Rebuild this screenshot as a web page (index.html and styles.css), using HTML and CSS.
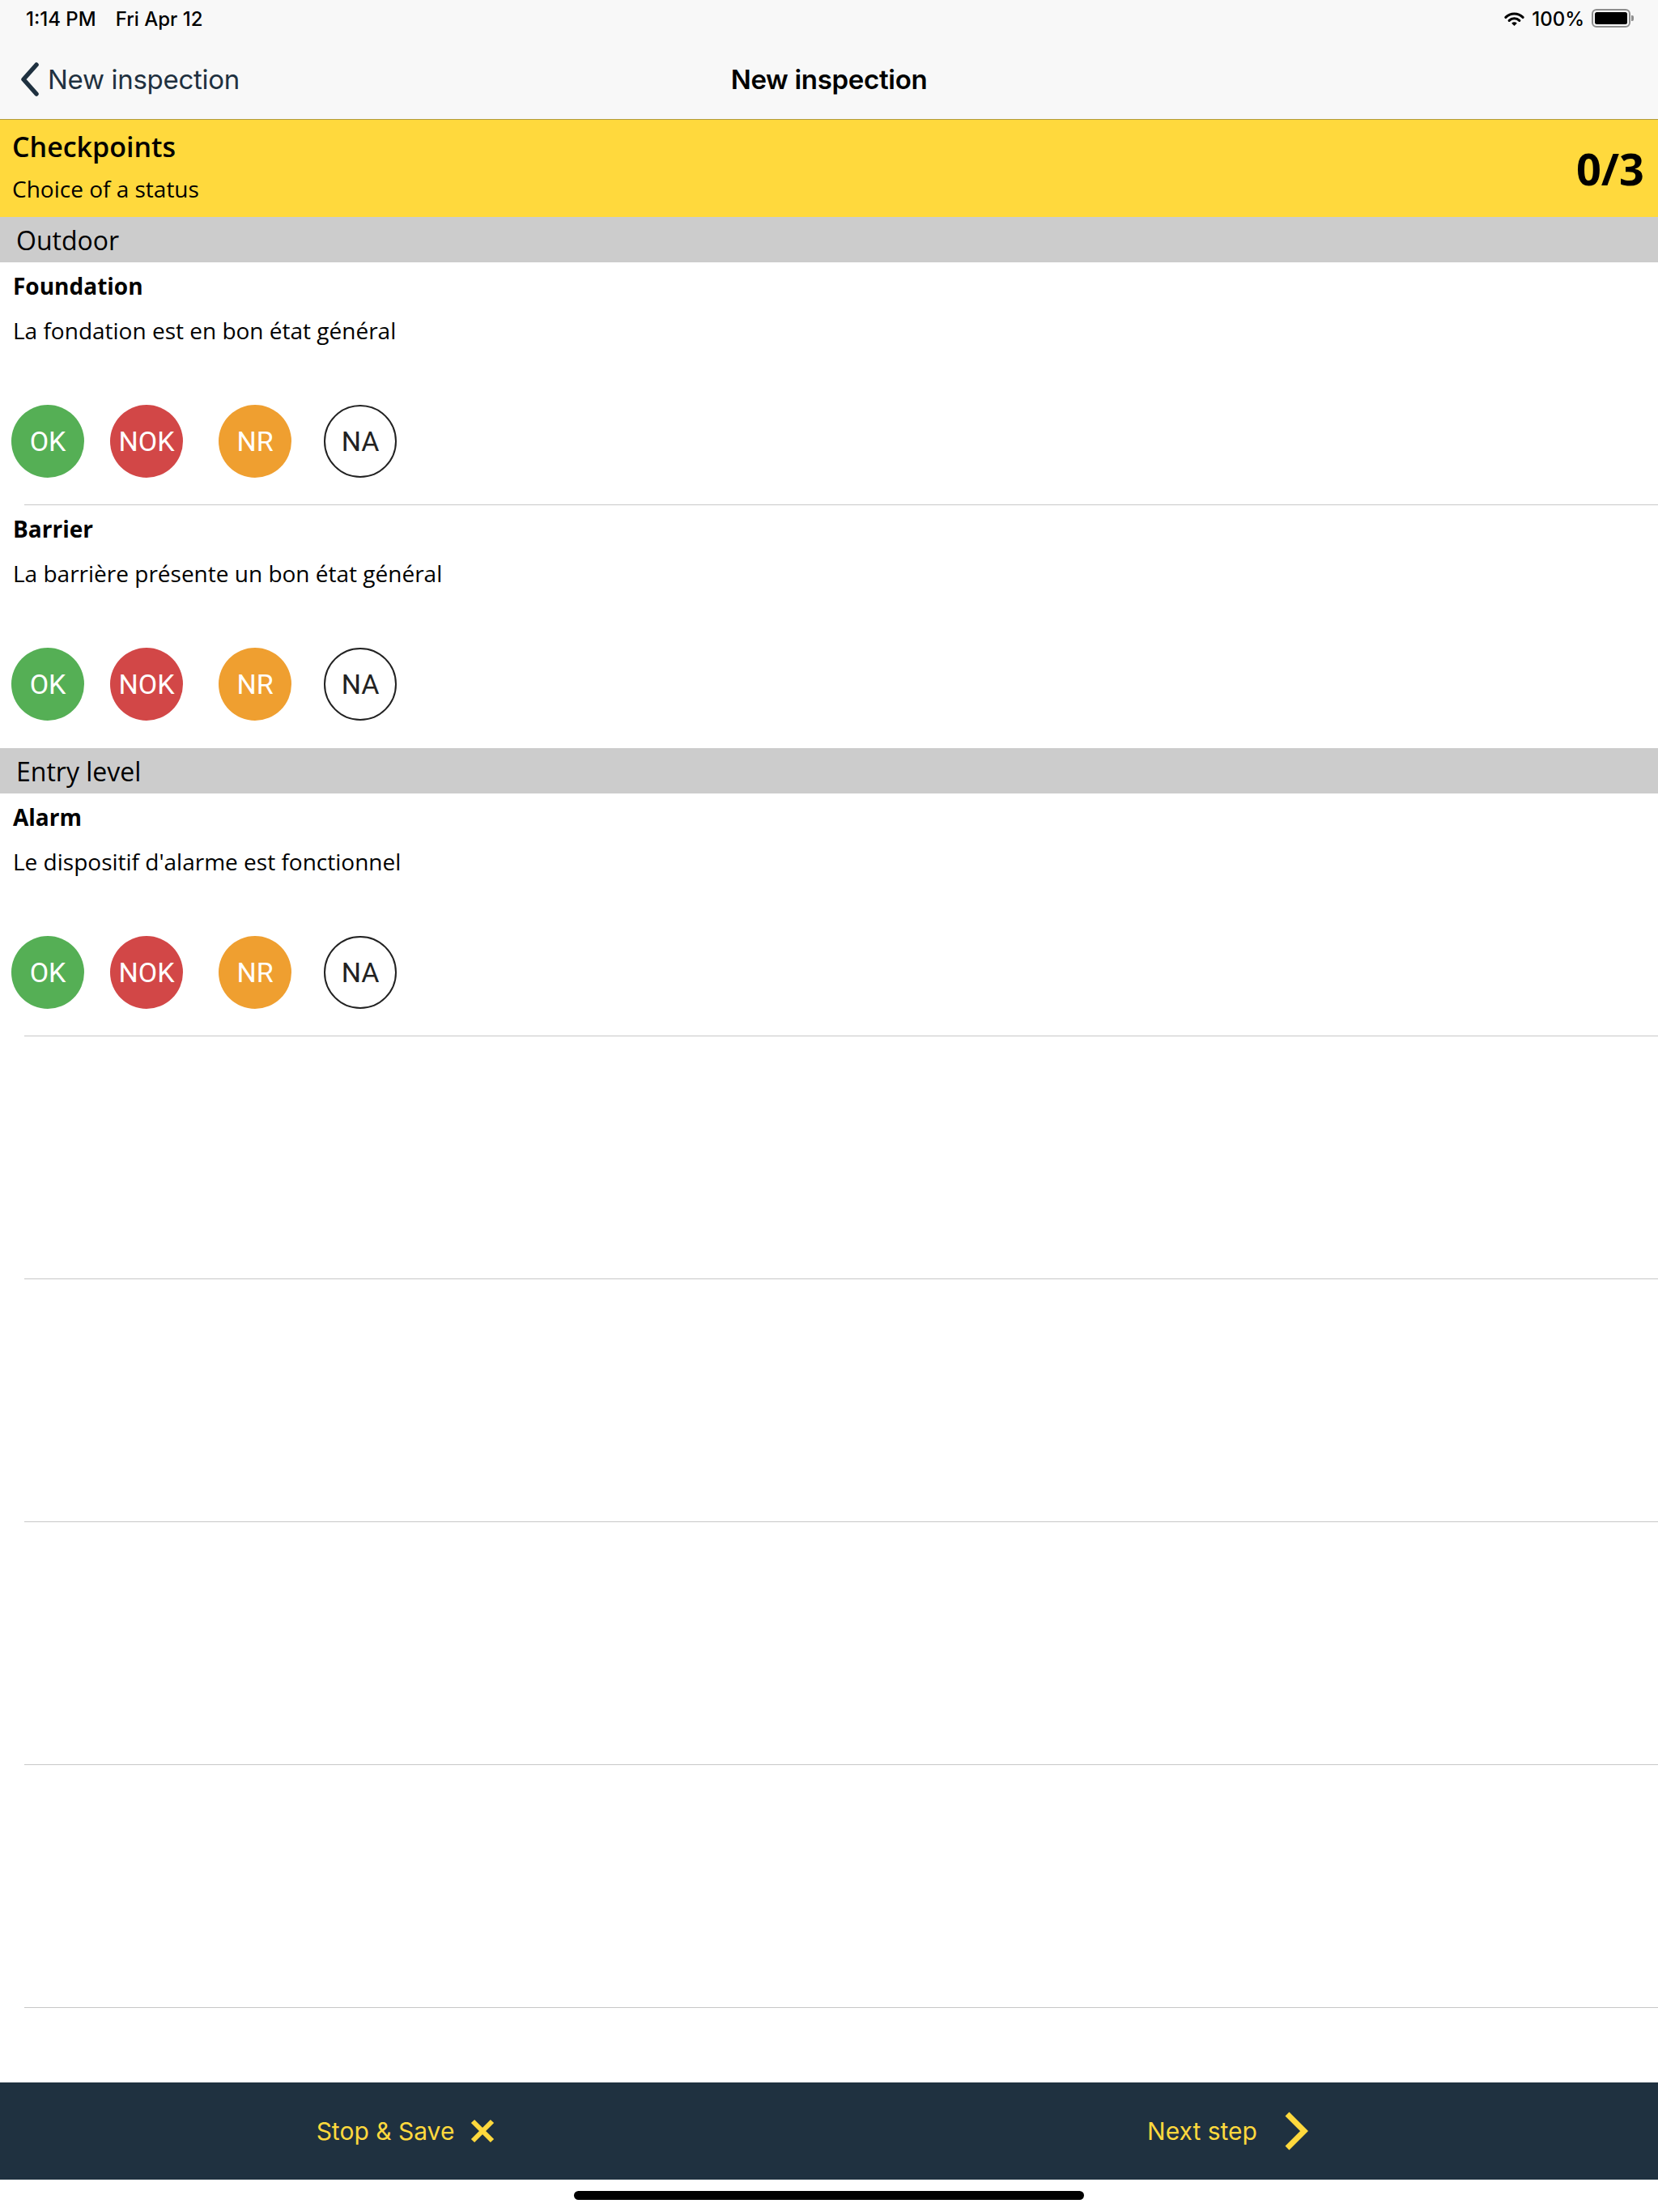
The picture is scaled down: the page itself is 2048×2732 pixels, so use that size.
FILE: index.html
```html
<!DOCTYPE html>
<html lang="en">
<head>
  <meta charset="UTF-8">
  <meta name="viewport" content="width=device-width, initial-scale=1.0">
  <title>New inspection</title>
  <link rel="stylesheet" href="styles.css">
</head>
<body>
  <div class="screen">
    <header class="topbar">
      <div class="status">
        <div class="status-left">
          <span>1:14 PM</span>
          <span>Fri Apr 12</span>
        </div>
        <div class="status-right">
          <svg class="wifi" width="27" height="19" viewBox="0 0 27 19">
            <path d="M2.9 7.4 A15 15 0 0 1 24.1 7.4" fill="none" stroke="#000" stroke-width="3.2" stroke-linecap="round"/>
            <path d="M7.2 11.3 A9 9 0 0 1 19.8 11.3" fill="none" stroke="#000" stroke-width="3.2" stroke-linecap="round"/>
            <path d="M13.5 18 L10.2 14.7 A4.6 4.6 0 0 1 16.8 14.7 Z" fill="#000"/>
          </svg>
          <span>100%</span>
          <svg class="battery" width="52" height="24" viewBox="0 0 52 24">
            <rect x="1" y="1" width="46" height="21" rx="5" fill="none" stroke="#8e8e8e" stroke-width="2"/>
            <rect x="4" y="4" width="40" height="15" rx="2.5" fill="#000"/>
            <path d="M49 8 h1 a2 2 0 0 1 2 2 v3 a2 2 0 0 1 -2 2 h-1 Z" fill="#8e8e8e"/>
          </svg>
        </div>
      </div>
      <nav class="navbar">
        <a class="back" href="#">
          <svg width="26" height="42" viewBox="0 0 26 42">
            <path d="M21 3 L5 21 L21 39" fill="none" stroke="#1f3140" stroke-width="5.5" stroke-linecap="round" stroke-linejoin="round"/>
          </svg>
          <span>New inspection</span>
        </a>
        <h1 class="nav-title">New inspection</h1>
        <div></div>
      </nav>
    </header>

    <section class="summary">
      <div class="summary-text">
        <div class="summary-title">Checkpoints</div>
        <div class="summary-sub">Choice of a status</div>
      </div>
      <div class="summary-count">0/3</div>
    </section>

    <div class="list">
      <div class="section-head">Outdoor</div>

      <div class="row">
        <div class="row-title">Foundation</div>
        <div class="row-text">La fondation est en bon état général</div>
        <div class="choices">
          <span class="choice ok">OK</span>
          <span class="choice nok">NOK</span>
          <span class="choice nr">NR</span>
          <span class="choice na">NA</span>
        </div>
      </div>

      <div class="row last">
        <div class="row-title">Barrier</div>
        <div class="row-text">La barrière présente un bon état général</div>
        <div class="choices">
          <span class="choice ok">OK</span>
          <span class="choice nok">NOK</span>
          <span class="choice nr">NR</span>
          <span class="choice na">NA</span>
        </div>
      </div>

      <div class="section-head">Entry level</div>

      <div class="row">
        <div class="row-title">Alarm</div>
        <div class="row-text">Le dispositif d'alarme est fonctionnel</div>
        <div class="choices">
          <span class="choice ok">OK</span>
          <span class="choice nok">NOK</span>
          <span class="choice nr">NR</span>
          <span class="choice na">NA</span>
        </div>
      </div>

      <div class="row"></div>
      <div class="row"></div>
      <div class="row"></div>
      <div class="row"></div>
    </div>

    <footer class="actions">
      <a class="action stop" href="#">
        <span>Stop &amp; Save</span>
        <svg width="30" height="30" viewBox="0 0 30 30">
          <path d="M3 3 L27 27 M27 3 L3 27" stroke="#ffd93d" stroke-width="6"/>
        </svg>
      </a>
      <a class="action next" href="#">
        <span>Next step</span>
        <svg width="32" height="48" viewBox="0 0 32 48">
          <path d="M5 3 L26 24 L5 45" fill="none" stroke="#ffd93d" stroke-width="7"/>
        </svg>
      </a>
    </footer>

    <div class="home">
      <span class="home-bar"></span>
    </div>
  </div>
</body>
</html>
```

FILE: styles.css
```css
html {
  --yellow: #ffd93d;
  --navy: #1f3140;
  --grey: #cccccc;
  --line: #c8c8c8;
}

html, body {
  margin: 0;
  padding: 0;
}

body {
  width: 2048px;
  height: 2732px;
  background: #fff;
  font-family: "Open Sans", "Liberation Sans", sans-serif;
  color: #000;
  overflow: hidden;
}

.screen {
  display: flex;
  flex-direction: column;
  height: 2732px;
}

/* barre du haut */
.topbar {
  background: #f8f8f8;
  border-bottom: 1px solid #b39c3c;
  font-family: Inter, "Liberation Sans", sans-serif;
}

.status {
  height: 46px;
  display: flex;
  align-items: center;
  justify-content: space-between;
  padding: 0 30px 0 32px;
  font-size: 24px;
  font-weight: 500;
}

.status-left {
  display: flex;
  gap: 24px;
}

.status-right {
  display: flex;
  align-items: center;
  gap: 8px;
}

.status-right .battery {
  margin-left: 1px;
}

.navbar {
  height: 101px;
  display: grid;
  grid-template-columns: 1fr auto 1fr;
  align-items: center;
}

.back {
  display: flex;
  align-items: center;
  gap: 9px;
  padding-left: 24px;
  padding-top: 2px;
  color: var(--navy);
  text-decoration: none;
  font-size: 33px;
  letter-spacing: -0.3px;
}

.nav-title {
  margin: 0;
  padding-top: 2px;
  font-size: 33px;
  font-weight: 600;
  letter-spacing: -0.3px;
}

/* bandeau jaune */
.summary {
  height: 120px;
  background: var(--yellow);
  display: flex;
  justify-content: space-between;
  align-items: center;
  padding: 0 17px 0 15px;
  box-sizing: border-box;
}

.summary-text {
  align-self: flex-start;
  padding-top: 11px;
}

.summary-title {
  font-size: 34px;
  font-weight: 600;
  line-height: 44px;
}

.summary-sub {
  font-size: 28px;
  line-height: 38px;
  margin-top: 11px;
}

.summary-count {
  font-size: 54px;
  font-weight: 700;
  line-height: 1;
}

/* liste */
.list {
  flex: 1;
  overflow: hidden;
}

.section-head {
  height: 56px;
  box-sizing: border-box;
  background: var(--grey);
  padding: 2px 21px 0 20px;
  font-size: 32px;
  line-height: 54px;
}

.row {
  height: 300px;
  box-sizing: border-box;
  padding: 11px 15px 0 16px;
  background: linear-gradient(var(--line), var(--line)) no-repeat 30px 100% / calc(100% - 30px) 1px;
}

.row.last {
  background: none;
}

.row-title {
  font-size: 28px;
  font-weight: 700;
  line-height: 36px;
}

.row-text {
  font-size: 28px;
  line-height: 36px;
  margin-top: 19px;
}

.choices {
  display: flex;
  margin-top: 74px;
  margin-left: -2px;
}

.choice {
  width: 90px;
  height: 90px;
  box-sizing: border-box;
  border-radius: 50%;
  display: flex;
  align-items: center;
  justify-content: center;
  color: #fff;
  font-family: Roboto, "Liberation Sans", sans-serif;
  font-size: 34px;
}

.ok {
  background: #55af55;
}

.nok {
  background: #d24747;
  margin-left: 32px;
}

.nr {
  background: #ef9f30;
  margin-left: 44px;
}

.na {
  border: 2px solid #222;
  color: #222;
  margin-left: 40px;
}

/* actions du bas */
.actions {
  height: 120px;
  background: var(--navy);
  display: flex;
  font-family: Inter, "Liberation Sans", sans-serif;
}

.action {
  flex: 1;
  display: flex;
  align-items: center;
  justify-content: center;
  color: var(--yellow);
  text-decoration: none;
  font-size: 30px;
}

.stop {
  gap: 20px;
  padding-right: 14px;
}

.next {
  gap: 32px;
  padding-right: 30px;
}

.home {
  height: 40px;
  display: flex;
  justify-content: center;
  padding-top: 14px;
  box-sizing: border-box;
}

.home-bar {
  width: 630px;
  height: 11px;
  border-radius: 6px;
  background: #000;
}
```
